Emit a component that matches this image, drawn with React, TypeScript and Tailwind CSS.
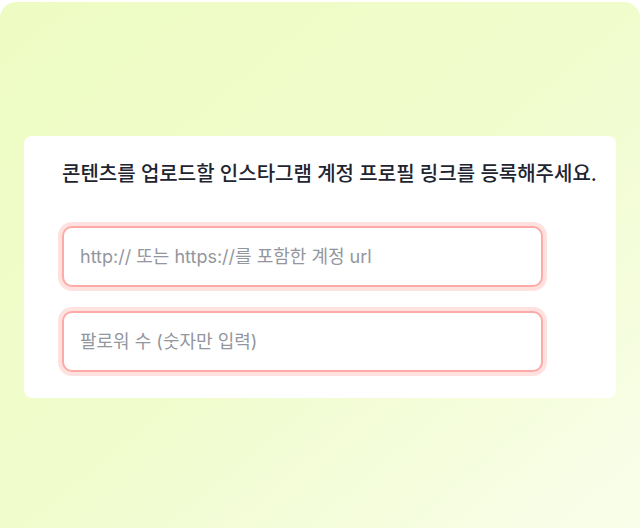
export default function App() {
  return (
    <div className="h-[528px] w-[640px] bg-white pt-[2px] font-['Inter','Noto_Sans_CJK_KR',sans-serif]">
      <div className="h-[540px] rounded-2xl bg-gradient-to-br from-[#eefcc3] via-[#f1fccd] to-[#f9feeb] px-6 pt-[134px]">
        <div className="rounded-lg bg-white pb-[26px] pl-[38px] pr-4 pt-[25px]">
          <h2 className="text-[20px] leading-[26px] font-medium text-[#1e2430]">
            콘텐츠를 업로드할 인스타그램 계정 프로필 링크를 등록해주세요.
          </h2>
          <div className="mt-[39px] flex w-[481px] flex-col gap-6">
            <input
              type="text"
              placeholder="http:// 또는 https://를 포함한 계정 url"
              className="h-[61px] w-full rounded-[10px] border-2 border-[#ffaaa6] bg-white px-[16px] text-[18px] text-[#1e2430] outline-none ring-4 ring-[#ffe2e0] placeholder:text-[#93969e]"
            />
            <input
              type="text"
              placeholder="팔로워 수 (숫자만 입력)"
              className="h-[61px] w-full rounded-[10px] border-2 border-[#ffaaa6] bg-white px-[16px] text-[18px] text-[#1e2430] outline-none ring-4 ring-[#ffe2e0] placeholder:text-[#93969e]"
            />
          </div>
        </div>
      </div>
    </div>
  );
}
